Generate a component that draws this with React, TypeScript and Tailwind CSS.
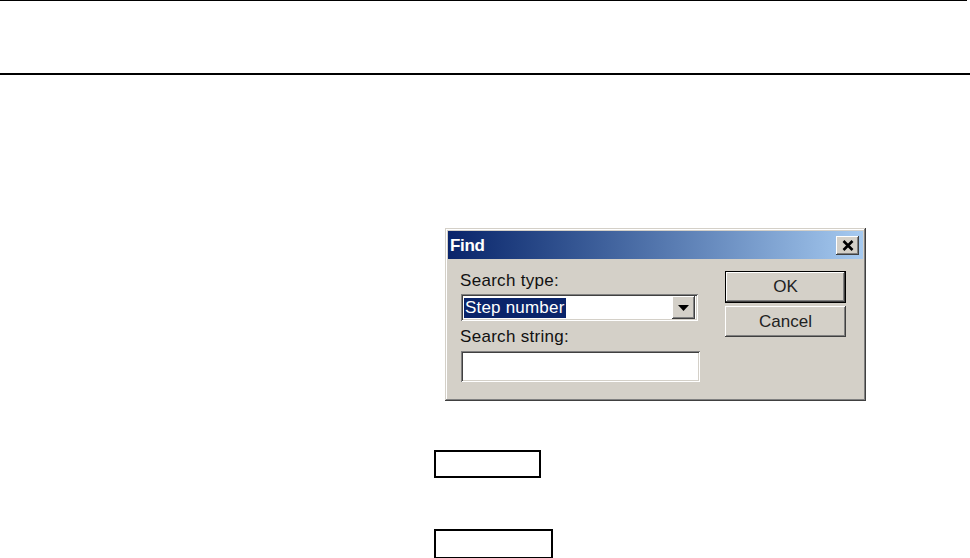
import React from 'react';

const raised =
  'bg-[#d4d0c8] shadow-[inset_-1px_-1px_#404040,inset_1px_1px_#ffffff,inset_-2px_-2px_#808080,inset_2px_2px_#d4d0c8]';
const sunken =
  'bg-white shadow-[inset_1px_1px_#808080,inset_-1px_-1px_#ffffff,inset_2px_2px_#404040,inset_-2px_-2px_#d4d0c8]';

const FindDialog = () => {
  return (
    <div className="ml-[445px] mt-[153px] flex h-[173px] w-[421px] flex-col bg-[#d4d0c8] p-[3px] shadow-[inset_-1px_-1px_#404040,inset_1px_1px_#d4d0c8,inset_-2px_-2px_#808080,inset_2px_2px_#ffffff]">
      <div className="flex h-[28px] items-center justify-between bg-gradient-to-r from-[#0a246a] to-[#a6caf0] pl-[2px] pr-[4px]">
        <span className="text-[17px] font-bold leading-none tracking-[-0.3px] text-white">Find</span>
        <button className={`flex h-[19px] w-[23px] items-center justify-center ${raised}`}>
          <svg width="12" height="11" viewBox="0 0 12 11">
            <path d="M1.5 1 L10.5 10 M10.5 1 L1.5 10" stroke="#000" strokeWidth="2.6" />
          </svg>
        </button>
      </div>

      <div className="flex pl-[12px] pt-[12px]">
        <div className="flex w-[240px] flex-col">
          <label className="h-[20px] text-[17px] leading-[20px] tracking-[0.3px] text-[#111]">Search type:</label>
          <div className={`mt-[3px] ml-[1px] flex h-[27px] w-[237px] items-center pl-[2px] pr-[3px] ${sunken}`}>
            <div className="flex flex-1 items-center pl-[1px]">
              <span className="bg-[#0a246a] px-[1px] text-[17px] leading-[20px] tracking-[0.2px] text-white">Step number</span>
            </div>
            <div className={`flex h-[23px] w-[23px] items-center justify-center ${raised}`}>
              <svg width="11" height="6" viewBox="0 0 11 6">
                <path d="M0 0 H11 L5.5 6 Z" fill="#000" />
              </svg>
            </div>
          </div>
          <label className="mt-[6px] h-[20px] text-[17px] leading-[20px] tracking-[0.3px] text-[#111]">Search string:</label>
          <div className={`mt-[4px] ml-[1px] h-[31px] w-[239px] ${sunken}`} />
        </div>

        <div className="ml-[25px] flex flex-col">
          <button className="h-[32px] w-[121px] border border-black">
            <div className={`flex h-full w-full items-center justify-center text-[17px] text-[#222] ${raised}`}>OK</div>
          </button>
          <button className={`mt-[3px] flex h-[31px] w-[121px] items-center justify-center text-[17px] text-[#222] ${raised}`}>
            Cancel
          </button>
        </div>
      </div>
    </div>
  );
};

export default function App() {
  return (
    <div className="h-[558px] w-[970px] overflow-hidden bg-white font-['Liberation_Sans',Arial,sans-serif]">
      <div className="h-px w-[967px] bg-black" />
      <div className="mt-[72px] h-[2px] w-full bg-black" />
      <FindDialog />
      <div className="ml-[434px] mt-[49px] h-[28px] w-[107px] border-2 border-black" />
      <div className="ml-[434px] mt-[51px] h-[30px] w-[119px] border-2 border-black" />
    </div>
  );
}
